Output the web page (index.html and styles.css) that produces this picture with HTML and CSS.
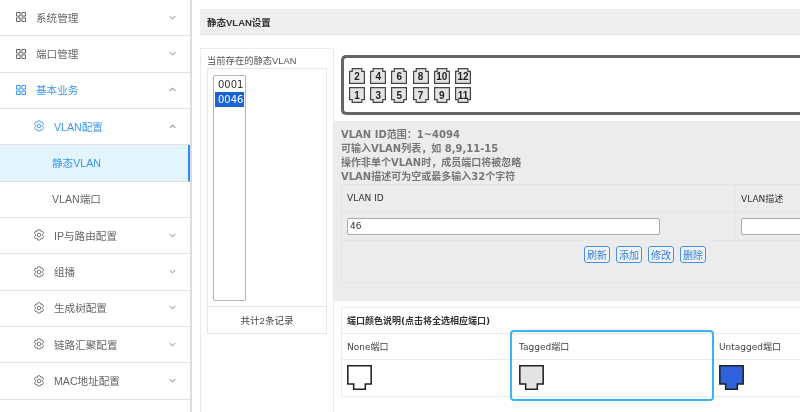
FILE: index.html
```html
<!DOCTYPE html>
<html lang="zh">
<head>
<meta charset="utf-8">
<title>静态VLAN设置</title>
<link rel="stylesheet" href="styles.css">
</head>
<body>
<svg class="defs" width="0" height="0" aria-hidden="true">
  <symbol id="grid" viewBox="0 0 10 10"><path d="M.5.5h3.600v3.600H.5zM5.900.5h3.600v3.600H5.900zM.5 5.900h3.600v3.600H.5zM5.900 5.900h3.600v3.600H5.900z" fill="none" stroke="currentColor" stroke-width="1"/></symbol>
  <symbol id="gear" viewBox="0 0 12 12"><path d="M4.600 1.100 6 .6l1.400.5.4 1.200 1.200-.3 1.100 1 .3 1.400-.9.9v1.200l.9.9-.3 1.400-1.100 1-1.200-.3-.4 1.200-1.400.5-1.400-.5-.4-1.200-1.200.3-1.100-1-.3-1.400.9-.9V5.300l-.9-.9.3-1.400 1.100-1 1.200.3z" fill="none" stroke="currentColor" stroke-width=".9" stroke-linejoin="round"/><circle cx="6" cy="6" r="1.800" fill="none" stroke="currentColor" stroke-width=".9"/></symbol>
  <symbol id="down" viewBox="0 0 10 6"><path d="M1 1l4 4 4-4" fill="none" stroke="currentColor" stroke-width="1.200"/></symbol>
  <symbol id="up" viewBox="0 0 10 6"><path d="M1 5l4-4 4 4" fill="none" stroke="currentColor" stroke-width="1.200"/></symbol>
  <symbol id="port-up" viewBox="0 0 16 16"><path d="M.6 15.400V3.400h2.600V.6h9.600v2.800h2.600v12z" fill="#e4e4e4" stroke="#444" stroke-width="1.200"/></symbol>
  <symbol id="port-down" viewBox="0 0 24 24"><path d="M.8.8h22.400v17.400h-5.600v5H6.400v-5H.8z" fill="currentColor" stroke="#222" stroke-width="1.500"/></symbol>
</svg>

<aside class="side">
  <div class="row"><svg class="ico-grid"><use href="#grid"/></svg><span class="label">系统管理</span><svg class="chev"><use href="#down"/></svg></div>
  <div class="row"><svg class="ico-grid"><use href="#grid"/></svg><span class="label">端口管理</span><svg class="chev"><use href="#down"/></svg></div>
  <div class="row on"><svg class="ico-grid"><use href="#grid"/></svg><span class="label">基本业务</span><svg class="chev dark"><use href="#up"/></svg></div>
  <div class="row sub on"><svg class="ico-gear"><use href="#gear"/></svg><span class="label">VLAN配置</span><svg class="chev dark"><use href="#up"/></svg></div>
  <div class="row leaf current"><span class="label">静态VLAN</span></div>
  <div class="row leaf"><span class="label">VLAN端口</span></div>
  <div class="row sub"><svg class="ico-gear"><use href="#gear"/></svg><span class="label">IP与路由配置</span><svg class="chev"><use href="#down"/></svg></div>
  <div class="row sub"><svg class="ico-gear"><use href="#gear"/></svg><span class="label">组播</span><svg class="chev"><use href="#down"/></svg></div>
  <div class="row sub"><svg class="ico-gear"><use href="#gear"/></svg><span class="label">生成树配置</span><svg class="chev"><use href="#down"/></svg></div>
  <div class="row sub"><svg class="ico-gear"><use href="#gear"/></svg><span class="label">链路汇聚配置</span><svg class="chev"><use href="#down"/></svg></div>
  <div class="row sub"><svg class="ico-gear"><use href="#gear"/></svg><span class="label">MAC地址配置</span><svg class="chev"><use href="#down"/></svg></div>
</aside>

<main class="main">
  <h1 class="page-title">静态VLAN设置</h1>
  <div class="columns">
    <section class="list-panel">
      <div class="list-title">当前存在的静态VLAN</div>
      <div class="list-box">
        <div class="list-body">
          <div class="select">
            <div class="opt">0001</div>
            <div class="opt sel">0046</div>
          </div>
        </div>
        <div class="list-foot">共计2条记录</div>
      </div>
    </section>

    <section class="work">
      <div class="switch">
        <div class="ports">
          <div class="port"><svg><use href="#port-up"/></svg><b>2</b></div>
          <div class="port"><svg><use href="#port-up"/></svg><b>4</b></div>
          <div class="port"><svg><use href="#port-up"/></svg><b>6</b></div>
          <div class="port"><svg><use href="#port-up"/></svg><b>8</b></div>
          <div class="port"><svg><use href="#port-up"/></svg><b>10</b></div>
          <div class="port"><svg><use href="#port-up"/></svg><b>12</b></div>
          <div class="port flip"><svg><use href="#port-up"/></svg><b>1</b></div>
          <div class="port flip"><svg><use href="#port-up"/></svg><b>3</b></div>
          <div class="port flip"><svg><use href="#port-up"/></svg><b>5</b></div>
          <div class="port flip"><svg><use href="#port-up"/></svg><b>7</b></div>
          <div class="port flip"><svg><use href="#port-up"/></svg><b>9</b></div>
          <div class="port flip"><svg><use href="#port-up"/></svg><b>11</b></div>
        </div>
      </div>

      <div class="form">
        <div class="hints">
          <div>VLAN ID范围：1~4094</div>
          <div>可输入VLAN列表，如 8,9,11-15</div>
          <div>操作非单个VLAN时，成员端口将被忽略</div>
          <div>VLAN描述可为空或最多输入32个字符</div>
        </div>
        <div class="form-table">
          <div class="cell head">VLAN ID</div>
          <div class="cell head last">VLAN描述</div>
          <div class="cell field"><input class="input wide" type="text" value="46"></div>
          <div class="cell field last"><input class="input" type="text"></div>
          <div class="actions">
            <button class="btn" type="button">刷新</button>
            <button class="btn" type="button">添加</button>
            <button class="btn" type="button">修改</button>
            <button class="btn" type="button">删除</button>
          </div>
        </div>
      </div>

      <div class="legend">
        <div class="legend-title">端口颜色说明(点击将全选相应端口)</div>
        <div class="legend-grid">
          <div class="lg-head">None端口</div>
          <div class="lg-head">Tagged端口</div>
          <div class="lg-head">Untagged端口</div>
          <div class="lg-icon none"><svg><use href="#port-down"/></svg></div>
          <div class="lg-icon tagged"><svg><use href="#port-down"/></svg></div>
          <div class="lg-icon untagged"><svg><use href="#port-down"/></svg></div>
        </div>
        <div class="focus-ring"></div>
      </div>
    </section>
  </div>
</main>
</body>
</html>
```

FILE: styles.css
```css
* { box-sizing: border-box; }
html, body { height: 100%; }
body {
  margin: 0;
  display: flex;
  height: 412px;
  overflow: hidden;
  background: #fff;
  color: #333;
  font-family: "Liberation Sans", "Noto Sans CJK SC", sans-serif;
  filter: blur(.3px);
}
.defs { position: absolute; }

/* sidebar */
.side {
  flex: 0 0 192px;
  border-right: 2px solid #dcdcdc;
  overflow: hidden;
}
.row {
  display: flex;
  align-items: center;
  height: 36.35px;
  padding: 0 14px 1px 16px;
  border-bottom: 1.5px solid #e0e2e4;
  font-size: 10.6px;
  color: #666;
}
.ico-grid { width: 10px; height: 10px; margin-right: 10px; flex: none; }
.ico-gear { width: 12px; height: 12px; margin-right: 9px; flex: none; color: #666; }
.label { flex: 1; white-space: nowrap; }
.chev { width: 7px; height: 5px; flex: none; color: #666; }
.chev.dark { color: #555; }
.row.on { color: #3a97f3; }
.row.on .ico-gear { color: #3a97f3; }
.row.sub { padding-left: 33px; }
.row.leaf { padding-left: 52px; }
.row.current {
  background: #e3f4fd;
  color: #3a97f3;
  border-right: 2px solid #2f8cf0;
}

/* main */
.main {
  flex: 1;
  min-width: 0;
  padding: 9px 0 0 8px;
  overflow: hidden;
}
.page-title {
  margin: 0 0 13px;
  height: 26px;
  padding-left: 7px;
  display: flex;
  align-items: center;
  background: #efefef;
  border-bottom: 1px solid #e6e6e6;
  font-size: 9.5px;
  font-weight: bold;
  color: #333;
}
.columns { display: flex; height: 364px; }

/* VLAN list */
.list-panel {
  flex: 0 0 134px;
  border: 1px solid #e8ecf0;
  border-bottom: 0;
  padding: 5px 6px 0;
}
.list-title {
  height: 14px;
  font-size: 9.3px;
  line-height: 14px;
  color: #555;
}
.list-box { border: 1px solid #e4e8ec; }
.list-body {
  height: 238px;
  padding: 6px 5px;
  border-bottom: 1px solid #e4e8ec;
}
.select {
  width: 33px;
  height: 226px;
  padding: 1px;
  background: #fff;
  border: 1px solid #b4b4c0;
  border-radius: 2px;
  font-family: "DejaVu Sans", sans-serif;
  font-size: 10px;
}
.opt { height: 15px; line-height: 15px; padding-left: 3px; color: #333; }
.opt.sel { background: #1a64d8; color: #fff; }
.list-foot {
  height: 26px;
  display: flex;
  align-items: center;
  justify-content: center;
  font-size: 9.5px;
  color: #444;
}

/* work column */
.work { width: 700px; flex: none; padding-top: 7px; }
.switch {
  height: 60px;
  margin-left: 7px;
  padding: 10px 0 0 5px;
  border: 3px solid #666;
  border-right: 0;
  border-radius: 5px 0 0 5px;
}
.ports {
  display: grid;
  grid-template-columns: repeat(6, 16px);
  grid-auto-rows: 16px;
  column-gap: 5.2px;
  row-gap: 3px;
}
.port {
  position: relative;
  display: flex;
  align-items: center;
  justify-content: center;
}
.port svg { position: absolute; inset: 0; width: 16px; height: 16px; }
.port.flip svg { transform: scaleY(-1); }
.port b {
  position: relative;
  font-size: 10px;
  font-family: "Liberation Sans", sans-serif;
  color: #222;
}

.form {
  height: 180px;
  margin-top: 6px;
  padding: 7px 0 0 7px;
  background: #ececec;
}
.hints {
  height: 56px;
  font-family: "DejaVu Sans", "Noto Sans CJK SC", sans-serif;
  font-size: 10px;
  font-weight: bold;
  line-height: 14px;
  color: #777;
}
.form-table {
  display: grid;
  grid-template-columns: 393px 1fr;
  grid-template-rows: 27px 29px 41px;
  border: 1px solid #e4e7ea;
  border-right: 0;
}
.cell {
  display: flex;
  align-items: center;
  padding-left: 5px;
  border-bottom: 1px solid #e4e7ea;
  font-family: "DejaVu Sans", "Noto Sans CJK SC", sans-serif;
  font-size: 9px;
  color: #333;
}
.cell.last { border-left: 1px solid #e4e7ea; }
.input {
  width: 140px;
  height: 17px;
  padding: 0 2px;
  background: #fff;
  border: 1px solid #aaa;
  border-radius: 2px;
  font-family: "DejaVu Sans", sans-serif;
  font-size: 9px;
  color: #333;
}
.input.wide { width: 313px; }
.actions {
  grid-column: 1 / -1;
  display: flex;
  gap: 6px;
  padding: 5px 0 0 242px;
  align-items: flex-start;
}
.btn {
  width: 26px;
  height: 17px;
  padding: 0;
  background: #f0f4f8;
  border: 1px solid #4a90e2;
  border-radius: 3px;
  font-family: "Noto Sans CJK SC", sans-serif;
  font-size: 10px;
  line-height: 15px;
  color: #3a7fd5;
}

.legend {
  position: relative;
  height: 90px;
  margin: 6px 0 0 7px;
  border: 1px solid #e8ecf0;
  border-right: 0;
  font-family: "DejaVu Sans", "Noto Sans CJK SC", sans-serif;
  font-size: 9px;
  color: #444;
}
.legend-title {
  height: 26px;
  display: flex;
  align-items: center;
  padding-left: 5px;
  border-bottom: 1px solid #e8ecf0;
  font-weight: bold;
  color: #333;
}
.legend-grid {
  display: grid;
  grid-template-columns: 172px 200px 1fr;
  grid-template-rows: 26px 36px;
}
.lg-head {
  display: flex;
  align-items: center;
  padding-left: 5px;
  border-bottom: 1px solid #e8ecf0;
}
.lg-icon { padding: 5px 0 0 5px; }
.lg-icon svg { display: block; width: 25px; height: 25px; }
.none { color: #fff; }
.tagged { color: #e4e4e4; }
.untagged { color: #2f62dc; }
.focus-ring {
  position: absolute;
  left: 168px;
  top: 22px;
  width: 204px;
  height: 71px;
  border: 2.5px solid #3db1f5;
  border-radius: 4px;
}
```
